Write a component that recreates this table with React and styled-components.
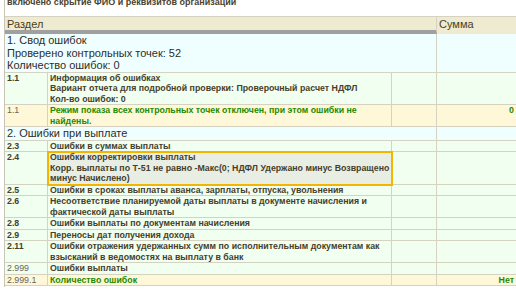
import React from 'react';
import styled, { createGlobalStyle } from 'styled-components';

const LINE = '#d6d2c2';

const GlobalStyle = createGlobalStyle`
  html, body {
    margin: 0;
    padding: 0;
    background: #ffffff;
    overflow: hidden;
  }
  body {
    font-family: "Liberation Sans", Arial, sans-serif;
  }
`;

const Page = styled.div`
  width: 516px;
  height: 290px;
  overflow: hidden;
  padding-left: 4px;
  box-sizing: border-box;
`;

const Frame = styled.div`
  border-left: 1px solid #c8c4b6;
  height: 100%;
`;

const Caption = styled.div`
  height: 19px;
  margin-top: -3px;
  padding-left: 2px;
  font-size: 9px;
  line-height: 11px;
  font-weight: 700;
  color: #4a4230;
  white-space: nowrap;
`;

const Table = styled.table`
  border-collapse: separate;
  border-spacing: 0;
  table-layout: fixed;
  width: 513px;
  border-top: 1px solid ${LINE};
`;

const HeadCell = styled.th`
  box-sizing: border-box;
  text-align: left;
  font-weight: 400;
  font-size: 11px;
  color: #4a3f1e;
  background: #efebd0;
  padding: 1px 2px 0;
  height: 17px;
  line-height: 12px;
  vertical-align: top;
  border-right: ${(p) => (p.$bar ? `1px solid ${LINE}` : 'none')};
  border-bottom: ${(p) => (p.$bar ? '4px solid #a0a0a0' : 'none')};
`;

const SectionCell = styled.td`
  background: #efffff;
  font-size: 11px;
  line-height: 12.5px;
  color: #2f2c26;
  padding: 0 2px;
  vertical-align: top;
  white-space: nowrap;
  border-right: 1px solid ${LINE};
  border-bottom: 1px solid ${LINE};
`;

const bgFor = (tone) =>
  tone === 'note' ? '#fff8d8' : tone === 'pick' ? '#e8eee4' : '#f1fff0';

const Cell = styled.td`
  background: ${(p) => bgFor(p.$tone)};
  font-size: 8.8px;
  line-height: 10.5px;
  font-weight: ${(p) => (p.$light ? 400 : 700)};
  color: ${(p) => (p.$green ? '#1f8a00' : p.$light ? '#6a6458' : '#463e2b')};
  text-align: ${(p) => (p.$right ? 'right' : 'left')};
  padding: 0 ${(p) => (p.$right ? '3px' : '2px')};
  vertical-align: top;
  white-space: nowrap;
  border-right: 1px solid ${LINE};
  border-bottom: 1px solid ${LINE};
  outline: ${(p) => (p.$selected ? '2px solid #f3b600' : 'none')};
  outline-offset: -1px;
`;

const Line = styled.div``;

const rows = [
  { kind: 'section', lines: ['1. Свод ошибок', 'Проверено контрольных точек: 52', 'Количество ошибок: 0'] },
  {
    code: '1.1',
    lines: [
      'Информация об ошибках',
      'Вариант отчета для подробной проверки: Проверочный расчет НДФЛ',
      'Кол-во ошибок: 0',
    ],
  },
  {
    code: '1.1',
    tone: 'note',
    green: true,
    lines: ['Режим показа всех контрольных точек отключен, при этом ошибки не', 'найдены.'],
    sum: '0',
  },
  { kind: 'section', lines: ['2. Ошибки при выплате'] },
  { code: '2.3', lines: ['Ошибки в суммах выплаты'] },
  {
    code: '2.4',
    selected: true,
    lines: [
      'Ошибки корректировки выплаты',
      'Корр. выплаты по Т-51 не равно -Макс(0; НДФЛ Удержано минус Возвращено',
      'минус Начислено)',
    ],
  },
  { code: '2.5', lines: ['Ошибки в сроках выплаты аванса, зарплаты, отпуска, увольнения'] },
  {
    code: '2.6',
    lines: ['Несоответствие планируемой даты выплаты в документе начисления и', 'фактической даты выплаты'],
  },
  { code: '2.8', lines: ['Ошибки выплаты по документам начисления'] },
  { code: '2.9', lines: ['Переносы дат получения дохода'] },
  {
    code: '2.11',
    lines: ['Ошибки отражения удержанных сумм по исполнительным документам как', 'взысканий в ведомостях на выплату в банк'],
  },
  { code: '2.999', lightCode: true, lines: ['Ошибки выплаты'] },
  { code: '2.999.1', lightCode: true, tone: 'note', green: true, lines: ['Количество ошибок'], sum: 'Нет' },
];

const App = () => (
  <>
    <GlobalStyle />
    <Page>
      <Frame>
        <Caption>включено скрытие ФИО и реквизитов организации</Caption>
        <Table>
          <colgroup>
            <col style={{ width: 43 }} />
            <col style={{ width: 344 }} />
            <col style={{ width: 45 }} />
            <col style={{ width: 81 }} />
          </colgroup>
          <thead>
            <tr>
              <HeadCell colSpan={3} $bar>
                Раздел
              </HeadCell>
              <HeadCell>Сумма</HeadCell>
            </tr>
          </thead>
          <tbody>
            {rows.map((row, i) =>
              row.kind === 'section' ? (
                <tr key={i}>
                  <SectionCell colSpan={3}>
                    {row.lines.map((l) => (
                      <Line key={l}>{l}</Line>
                    ))}
                  </SectionCell>
                  <SectionCell />
                </tr>
              ) : (
                <tr key={i}>
                  <Cell $tone={row.tone} $light={row.tone === 'note' || row.lightCode}>
                    {row.code}
                  </Cell>
                  <Cell $tone={row.selected ? 'pick' : row.tone} $green={row.green} $selected={row.selected}>
                    {row.lines.map((l) => (
                      <Line key={l}>{l}</Line>
                    ))}
                  </Cell>
                  <Cell $tone={row.tone} />
                  <Cell $tone={row.tone} $green={row.green} $right>
                    {row.sum}
                  </Cell>
                </tr>
              )
            )}
          </tbody>
        </Table>
      </Frame>
    </Page>
  </>
);

export default App;
